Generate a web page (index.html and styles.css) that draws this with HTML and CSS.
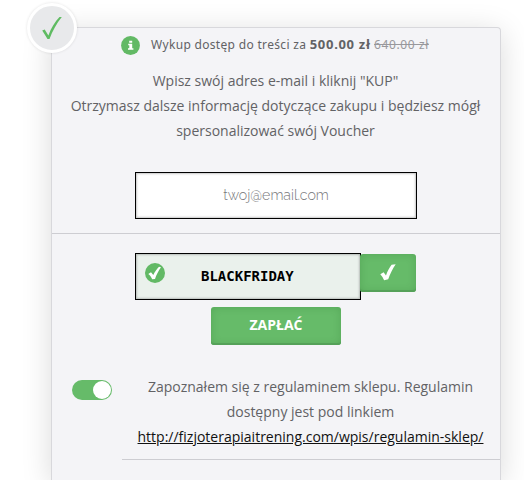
FILE: index.html
```html
<!DOCTYPE html>
<html lang="pl">

<head>
    <meta charset="UTF-8">
    <meta name="viewport" content="width=device-width, initial-scale=1.0">
    <title>Voucher</title>
    <link rel="stylesheet" href="styles.css">
</head>

<body>
    <form class="card">
        <div class="badge">
            <svg width="22" height="24" viewBox="0 0 22 24">
                <path d="M1.2 14.500 L3.700 13.500 L7.400 19.500 C10 12 14 5.500 18.500 1 L20.800 1 C15.500 7.500 11.500 15 8.500 23 L6.500 23 Z" fill="#5fbb62" />
            </svg>
        </div>

        <div class="price-row">
            <svg class="info-icon" width="19" height="19" viewBox="0 0 19 19">
                <circle cx="9.500" cy="9.500" r="9.400" fill="#62b965" />
                <path d="M8.200 4.700h3v2h-3zM7.200 7.700h4v4.500h1.200v1.500H7v-1.500h1.300v-3H7.200z" fill="#fff" />
            </svg>
            <p class="price-text">Wykup dostęp do treści za <b>500.00 zł</b> <s>640.00 zł</s></p>
        </div>

        <p class="intro">Wpisz swój adres e-mail i kliknij "KUP"<br>Otrzymasz dalsze informację dotyczące zakupu i będziesz mógł spersonalizować swój Voucher</p>

        <div class="email-row">
            <input class="field email" type="text" placeholder="twoj@email.com">
        </div>

        <div class="payment">
            <div class="coupon">
                <div class="field coupon-field">
                    <svg class="coupon-icon" width="20" height="20" viewBox="0 0 20 20">
                        <circle cx="10" cy="10" r="10" fill="#62b965" />
                        <path d="M3.300 10.900L6 9.300L8.300 12C10 8.600 11.800 6 14 3.800L16 4.200C13.300 8 11.500 11.500 10 15.900L7.200 16.300C6.300 14 5 12.300 3.300 10.900Z" fill="#fff" />
                    </svg>
                    <span class="coupon-code">BLACKFRIDAY</span>
                </div>
                <button class="btn apply" type="button" aria-label="Zastosuj">
                    <svg width="16" height="17" viewBox="0 0 16 17">
                        <path d="M0.300 10.300L3.600 8.300L6 11.500C7.500 7 9.500 3.500 11.600 0.700L15.700 0.300C12.500 5 10.200 9.700 8.200 15.300L4.100 16.300C3.200 14 1.900 12 0.300 10.300Z" fill="#fff" />
                    </svg>
                </button>
            </div>
            <button class="btn pay" type="button">ZAPŁAĆ</button>
        </div>

        <div class="terms">
            <label class="switch">
                <input type="checkbox" checked>
                <span class="slider"></span>
            </label>
            <p class="terms-text">Zapoznałem się z regulaminem sklepu. Regulamin dostępny jest pod linkiem <a href="#">http://fizjoterapiaitrening.com/wpis/regulamin-sklep/</a></p>
        </div>
    </form>
</body>

</html>
```

FILE: styles.css
```css
* {
    box-sizing: border-box;
}

body {
    margin: 0;
    background: #fff;
    font-family: "Open Sans", "Noto Sans", sans-serif;
    font-size: 14px;
    line-height: 25px;
    color: #626265;
}

p {
    margin: 0;
}

.card {
    position: relative;
    width: 450px;
    height: 453px;
    margin: 27px 0 0 51px;
    background: #f4f4f7;
    border: 1px solid #d8d8dc;
    border-bottom: 0;
    border-radius: 4px 4px 0 0;
    box-shadow: 0 5px 30px rgba(0, 0, 0, 0.15);
    text-align: center;
}

.badge {
    position: absolute;
    top: -25px;
    left: -25px;
    display: flex;
    align-items: center;
    justify-content: center;
    width: 50px;
    height: 50px;
    background: #e8e9eb;
    border: 3px solid #fff;
    border-radius: 50%;
    box-shadow: 0 0 3px rgba(0, 0, 0, 0.12);
}

.price-row {
    display: flex;
    align-items: center;
    height: 35px;
    padding-left: 69px;
    gap: 11px;
}

.price-text {
    margin-top: -2px;
    font-family: "Noto Sans", sans-serif;
    font-size: 12px;
    letter-spacing: 0.32px;
    white-space: nowrap;
}

.price-text b {
    font-size: 13px;
    letter-spacing: 0.7px;
}

.price-text s {
    color: #98989c;
    letter-spacing: 0.6px;
}

.intro {
    height: 75px;
    margin: 5px 1px 0 0;
}

.email-row {
    display: flex;
    height: 91px;
    padding: 29px 0 0 83px;
    border-bottom: 1px solid #cdcdd2;
}

.field {
    height: 47px;
    border: 1px solid #000;
    box-shadow: inset 0 0 2px 1px rgba(0, 0, 0, 0.22);
}

.email {
    width: 282px;
    padding: 0 0 2px;
    background: #fff;
    border-radius: 0;
    font-family: Raleway, Lato, sans-serif;
    font-size: 14.2px;
    font-weight: 300;
    text-align: center;
}

.email::placeholder {
    color: #77777b;
}

.payment {
    display: flex;
    flex-direction: column;
    padding: 19px 0 0 83px;
}

.coupon {
    display: flex;
}

.coupon-field {
    display: flex;
    align-items: center;
    width: 226px;
    padding-left: 9px;
    background: #eaf1ec;
}

.coupon-icon {
    margin: -7px 36px 0 0;
}

.coupon-code {
    font-family: "DejaVu Sans Mono", monospace;
    font-size: 14px;
    font-weight: bold;
    color: #000;
}

.btn {
    display: flex;
    align-items: center;
    justify-content: center;
    height: 38px;
    padding: 0 0 3px;
    background: #66bb69;
    border: 0;
    border-radius: 3px;
    box-shadow: inset 0 -2px 0 #55a159, inset 0 0 8px rgba(0, 70, 0, 0.16);
    color: #fff;
}

.apply {
    width: 56px;
    padding-bottom: 1px;
    margin: 1px 0 0 -1px;
}

.pay {
    width: 130px;
    margin: 7px 0 0 76px;
    font: bold 14px "Open Sans", sans-serif;
}

.terms {
    display: flex;
    margin-top: 19px;
}

.switch {
    flex: none;
    width: 70px;
    padding: 16px 0 0 20px;
}

.switch input {
    display: none;
}

.slider {
    display: flex;
    justify-content: flex-end;
    width: 40px;
    height: 20px;
    padding: 1px;
    background: #66bb69;
    border-radius: 10px;
}

.slider::before {
    content: "";
    width: 18px;
    height: 18px;
    background: #fff;
    border-radius: 50%;
}

.terms-text {
    flex: 1;
    height: 96px;
    padding: 10px 1px 0 0;
    border-bottom: 1px solid #cdcdd2;
}

.terms-text a {
    color: #111;
}
```
